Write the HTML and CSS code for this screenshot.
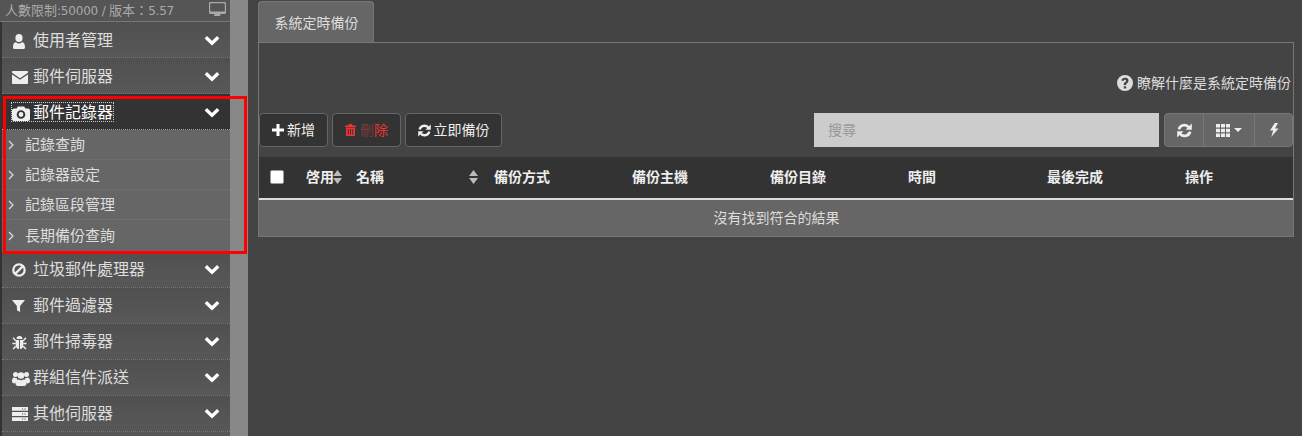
FILE: index.html
```html
<!DOCTYPE html>
<html lang="zh-Hant">
<head>
<meta charset="utf-8">
<title>系統定時備份</title>
<link rel="stylesheet" href="styles.css">
</head>
<body>
<svg class="sprite" width="0" height="0">
  <symbol id="i-user" viewBox="0 0 12 15"><ellipse cx="6" cy="4" rx="3.600" ry="4"/><path d="M1.200 15C.5 15 0 14.500 0 13.600c0-2.700.6-5.400 3-5.400.8.800 1.800 1.200 3 1.200s2.200-.4 3-1.200c2.400 0 3 2.700 3 5.400 0 .9-.5 1.400-1.200 1.400z"/></symbol>
  <symbol id="i-mail" viewBox="0 0 16 13"><path d="M1 0h14c.6 0 1 .4 1 1v.8L8 7.200 0 1.800V1c0-.6.400-1 1-1z"/><path d="M0 3.400l8 5.400 8-5.400V12c0 .6-.4 1-1 1H1c-.6 0-1-.4-1-1z"/></symbol>
  <symbol id="i-camera" viewBox="0 0 18 15"><path fill-rule="evenodd" d="M2 2.500h2.600L5.800.5h6.400l1.200 2H16c1.100 0 2 .9 2 2V13c0 1.100-.9 2-2 2H2c-1.100 0-2-.9-2-2V4.500c0-1.100.9-2 2-2zM9 4.200a4.300 4.300 0 1 0 0 8.600 4.300 4.300 0 0 0 0-8.600zm0 1.900a2.400 2.400 0 1 1 0 4.800 2.400 2.400 0 0 1 0-4.800z"/></symbol>
  <symbol id="i-ban" viewBox="0 0 16 16"><circle cx="8" cy="8" r="6.500" fill="none" stroke="currentColor" stroke-width="2.600"/><path d="M3.800 12.200l8.400-8.400" stroke="currentColor" stroke-width="2.600"/></symbol>
  <symbol id="i-filter" viewBox="0 0 14 14"><path d="M0 .5h14L8.700 7v6.500L5.300 11.500V7z"/></symbol>
  <symbol id="i-bug" viewBox="0 0 16 16"><path d="M4.800 4.200a3.200 3.200 0 0 1 6.400 0z"/><path d="M4 5.200h3.500V15C5.300 15 4 13.300 4 11zM8.500 5.200H12V11c0 2.300-1.300 4-3.500 4z"/><path d="M1.200 3l2.800 3.300M14.800 3l-2.800 3.300M.5 9h3.500M15.500 9H12M1.200 15l2.800-3M14.800 15l-2.800-3" stroke="currentColor" stroke-width="1.500" fill="none"/></symbol>
  <symbol id="i-users" viewBox="0 0 18 15"><circle cx="3.500" cy="3.500" r="2.500"/><circle cx="14.500" cy="3.500" r="2.500"/><circle cx="9" cy="4.500" r="3.300"/><path d="M0 10.500C0 8 .8 6.500 2.500 6.500c1 .6 1.600.8 2.400.5-.2 1.300.4 2.600 1 3.200-1.500.6-2.400 1.200-2.800 2.300-1.800 0-3.100-.7-3.100-2zM18 10.500c0-2.500-.8-4-2.500-4-1 .6-1.600.8-2.400.5.2 1.300-.4 2.600-1 3.200 1.500.6 2.400 1.200 2.800 2.300 1.800 0 3.100-.7 3.100-2z"/><path d="M6.500 8.500c1.500 1 3.500 1 5 0 2 0 3 1.500 3 4 0 1.500-1 2.500-2.300 2.500H5.800c-1.300 0-2.300-1-2.300-2.500 0-2.500 1-4 3-4z"/></symbol>
  <symbol id="i-server" viewBox="0 0 16 14"><path d="M0 0h16v3.800H0zM0 5.100h16v3.800H0zM0 10.200h16V14H0z"/><path d="M10 1.400h1.200v1H10zM12.400 1.400h1.200v1h-1.200zM10 6.500h1.200v1H10zM12.400 6.500h1.200v1h-1.200zM10 11.600h1.200v1H10zM12.400 11.600h1.200v1h-1.200z" fill="#555"/></symbol>
  <symbol id="i-chev" viewBox="0 0 16 11"><path d="M1.800 2.300L8 8.300l6.200-6" fill="none" stroke="currentColor" stroke-width="3.300"/></symbol>
  <symbol id="i-angle" viewBox="0 0 6 10"><path d="M1 1l4 4-4 4" fill="none" stroke="currentColor" stroke-width="1.200"/></symbol>
  <symbol id="i-plus" viewBox="0 0 12 12"><path d="M4.500 0h3v4.500H12v3H7.500V12h-3V7.500H0v-3h4.500z"/></symbol>
  <symbol id="i-trash" viewBox="0 0 11 12"><path d="M4 0h3l.7 1.500H11v1.400H0V1.500h3.300zM1 3.600h9V11c0 .6-.4 1-1 1H2c-.6 0-1-.4-1-1zm1.800 1.400v5.600h1V5zm2.200 0v5.600h1V5zm2.200 0v5.600h1V5z" fill-rule="evenodd"/></symbol>
  <symbol id="i-sync" viewBox="0 0 14 14"><path d="M1.800 6A5.300 5.300 0 0 1 11 3.800" fill="none" stroke="currentColor" stroke-width="2.500"/><path d="M13.800 0.500v5.800H8z"/><path d="M12.200 8A5.300 5.300 0 0 1 3 10.200" fill="none" stroke="currentColor" stroke-width="2.500"/><path d="M.2 13.500V7.700H6z"/></symbol>
  <symbol id="i-th" viewBox="0 0 14 13"><path d="M0 0h4v3.500H0zM5 0h4v3.500H5zM10 0h4v3.500h-4zM0 4.700h4v3.500H0zM5 4.700h4v3.500H5zM10 4.700h4v3.500h-4zM0 9.500h4V13H0zM5 9.500h4V13H5zM10 9.500h4V13h-4z"/></symbol>
  <symbol id="i-bolt" viewBox="0 0 10 14"><path d="M5.800 0L1 7.500h3.200L2.200 14 9.500 5.400H6L9 0z"/></symbol>
  <symbol id="i-help" viewBox="0 0 16 16"><path fill-rule="evenodd" d="M8 0a8 8 0 1 1 0 16A8 8 0 0 1 8 0zM6.800 11.200v2.300h2.400v-2.300zM8 2.700c-2 0-3.300 1-3.600 2.900l2.200.5c.1-.9.600-1.400 1.300-1.400s1.200.4 1.200 1c0 .5-.3.900-1 1.400-.9.600-1.300 1.200-1.300 2.200v.7h2.300v-.4c0-.5.200-.8.900-1.300 1-.7 1.500-1.500 1.500-2.700 0-1.900-1.500-2.900-2.500-2.900z"/></symbol>
  <symbol id="i-desktop" viewBox="0 0 17 15"><path fill-rule="evenodd" d="M1.200 0h14.600c.7 0 1.200.5 1.200 1.200v9.600c0 .7-.5 1.200-1.200 1.200h-4.800v1.200l1 .8H5v-.8l1-1.200H1.200C.5 12 0 11.500 0 10.800V1.200C0 .5.500 0 1.200 0zm0 1.300v8.200h14.600V1.300z"/></symbol>
  <symbol id="i-sort" viewBox="0 0 9 14"><path d="M4.500 0L9 6H0zM4.500 14L0 8h9z"/></symbol>
</svg>

<div class="page">
  <aside class="sidebar">
    <div class="side-main">
      <div class="side-head">
        <span>人數限制<span class="num">:50000 / </span>版本&#xFF1A;<span class="num">5.57</span></span>
        <svg class="ic-desktop"><use href="#i-desktop"/></svg>
      </div>
      <nav class="menu">
        <div class="item"><a class="link"><svg class="ic ic-user"><use href="#i-user"/></svg><span>使用者管理</span></a><svg class="chev"><use href="#i-chev"/></svg></div>
        <div class="item"><a class="link"><svg class="ic ic-mail"><use href="#i-mail"/></svg><span>郵件伺服器</span></a><svg class="chev"><use href="#i-chev"/></svg></div>
        <div class="item active"><a class="link"><svg class="ic ic-camera"><use href="#i-camera"/></svg><span>郵件記錄器</span></a><svg class="chev"><use href="#i-chev"/></svg></div>
        <div class="sub">
          <div class="sub-item"><svg class="angle"><use href="#i-angle"/></svg>記錄查詢</div>
          <div class="sub-item"><svg class="angle"><use href="#i-angle"/></svg>記錄器設定</div>
          <div class="sub-item"><svg class="angle"><use href="#i-angle"/></svg>記錄區段管理</div>
          <div class="sub-item"><svg class="angle"><use href="#i-angle"/></svg>長期備份查詢</div>
        </div>
        <div class="item"><a class="link"><svg class="ic ic-ban"><use href="#i-ban"/></svg><span>垃圾郵件處理器</span></a><svg class="chev"><use href="#i-chev"/></svg></div>
        <div class="item"><a class="link"><svg class="ic ic-filter"><use href="#i-filter"/></svg><span>郵件過濾器</span></a><svg class="chev"><use href="#i-chev"/></svg></div>
        <div class="item"><a class="link"><svg class="ic ic-bug"><use href="#i-bug"/></svg><span>郵件掃毒器</span></a><svg class="chev"><use href="#i-chev"/></svg></div>
        <div class="item"><a class="link"><svg class="ic ic-users"><use href="#i-users"/></svg><span>群組信件派送</span></a><svg class="chev"><use href="#i-chev"/></svg></div>
        <div class="item"><a class="link"><svg class="ic ic-server"><use href="#i-server"/></svg><span>其他伺服器</span></a><svg class="chev"><use href="#i-chev"/></svg></div>
        <div class="item-end"></div>
      </nav>
    </div>
    <div class="scrollbar"></div>
  </aside>

  <main class="content">
    <div class="tabs"><div class="tab">系統定時備份</div></div>
    <section class="panel">
      <div class="help"><svg class="ic-help"><use href="#i-help"/></svg><span>瞭解什麼是系統定時備份</span></div>
      <div class="toolbar">
        <button class="btn"><svg class="b-ic b-plus"><use href="#i-plus"/></svg>新增</button>
        <button class="btn btn-del"><svg class="b-ic b-trash"><use href="#i-trash"/></svg><span class="dim">刪</span>除</button>
        <button class="btn"><svg class="b-ic b-sync"><use href="#i-sync"/></svg>立即備份</button>
        <div class="search">搜尋</div>
        <div class="group">
          <div class="g-btn g-sync"><svg class="g-ic"><use href="#i-sync"/></svg></div>
          <div class="g-btn g-th"><svg class="g-th-ic"><use href="#i-th"/></svg><span class="caret"></span></div>
          <div class="g-btn g-bolt"><svg class="g-bolt-ic"><use href="#i-bolt"/></svg></div>
        </div>
      </div>
      <div class="thead">
        <div class="th th-check"><span class="check"></span></div>
        <div class="th th-sort th-narrow">啓用<svg class="sort sort-tight"><use href="#i-sort"/></svg></div>
        <div class="th th-sort">名稱<svg class="sort"><use href="#i-sort"/></svg></div>
        <div class="th">備份方式</div>
        <div class="th">備份主機</div>
        <div class="th">備份目錄</div>
        <div class="th">時間</div>
        <div class="th">最後完成</div>
        <div class="th">操作</div>
      </div>
      <div class="empty">沒有找到符合的結果</div>
    </section>
  </main>
</div>
<div class="highlight"></div>
</body>
</html>
```

FILE: styles.css
```css
* { box-sizing: border-box; }
html, body { margin: 0; height: 100%; overflow: hidden; }
body {
  background: #444;
  color: #fff;
  font: 14px/20px "Liberation Sans", "Noto Sans CJK TC", sans-serif;
}
svg { fill: currentColor; display: block; flex: none; }
.sprite { position: absolute; }
.page { display: flex; height: 436px; overflow: hidden; }

/* sidebar */
.sidebar { width: 248px; flex: none; display: flex; background: #333; }
.side-main { width: 230px; flex: none; }
.scrollbar { width: 18px; background: #888; }
.side-head {
  height: 22px;
  background: #555;
  border-bottom: 1px solid #777;
  padding: 0 4px 0 5px;
  display: flex;
  align-items: center;
  justify-content: space-between;
  color: #aaa;
  font-size: 13px;
}
.num { font: 12px/20px "DejaVu Sans", sans-serif; letter-spacing: -.2px; white-space: pre; }
.ic-desktop { width: 17px; height: 15px; color: #aaa; margin-bottom: 3px; }
.menu { margin-left: 2px; }
.item {
  height: 36px;
  display: flex;
  align-items: center;
  justify-content: space-between;
  background: linear-gradient(#505050, #585858);
  border-bottom: 1px dotted #777;
  padding: 1px 10px 0 10px;
  color: #ddd;
  font-size: 16px;
}
.sub ~ .item { padding-top: 0; padding-bottom: 1px; }
.link { display: grid; grid-template-columns: 21px auto; align-items: center; height: 18px; white-space: nowrap; }
.item.active { background: #333; color: #fff; border-bottom-color: #aaa; }
.item.active .link { outline: 1px dotted #ccc; }
.item-end { height: 4px; background: #555; }
.ic { color: #eee; justify-self: start; }
.ic-user { width: 12px; height: 15px; margin-left: 1px; }
.ic-mail { width: 16px; height: 13px; }
.ic-camera { width: 18px; height: 15px; }
.ic-ban { width: 14px; height: 14px; }
.ic-filter { width: 13px; height: 14px; }
.ic-bug { width: 15px; height: 15px; }
.ic-users { width: 18px; height: 15px; }
.ic-server { width: 16px; height: 14px; }
.chev { width: 16px; height: 11px; color: #fff; }
.sub { background: #666; height: 122px; padding-bottom: 2px; }
.sub-item {
  height: 30px;
  display: flex;
  align-items: center;
  border-bottom: 1px dotted #777;
  color: #ddd;
  font-size: 15px;
  padding-left: 6px;
}
.sub-item:last-child { border-bottom: 0; padding-top: 1px; }
.angle { width: 6px; height: 10px; margin-right: 11px; }

/* main */
.content { flex: 1; padding: 1px 8px 0 10px; min-width: 0; }
.tabs { display: flex; height: 41px; }
.tab {
  width: 116px;
  background: #666;
  border: 1px solid #777;
  border-bottom: 0;
  border-radius: 4px 4px 0 0;
  color: #ddd;
  text-align: center;
  line-height: 42px;
  padding-left: 1px;
}
.panel { border: 1px solid #777; height: 195px; }
.help {
  height: 20px;
  margin-top: 30px;
  padding-right: 2px;
  display: flex;
  justify-content: flex-end;
  align-items: center;
  gap: 4px;
  color: #ddd;
}
.ic-help { width: 16px; height: 16px; color: #ddd; }
.toolbar { display: flex; height: 34px; margin-top: 20px; }
.btn {
  height: 34px;
  border: 1px solid #666;
  border-radius: 4px;
  background: #333;
  color: #eee;
  font: inherit;
  padding: 0;
  display: flex;
  align-items: center;
  justify-content: center;
  width: 69px;
  margin-right: 4px;
}
.btn:nth-child(3) { width: 97px; }
.btn-del { color: #e33; }
.dim { color: #7a3a3a; }
.b-ic { margin-right: 3px; }
.b-plus { width: 12px; height: 12px; color: #fff; }
.b-trash { width: 11px; height: 12px; margin-right: 4px; }
.b-sync { width: 13px; height: 13px; }
.search {
  width: 345px;
  height: 34px;
  margin-left: auto;
  background: #ccc;
  color: #999;
  padding-left: 14px;
  line-height: 34px;
}
.group {
  width: 129px;
  height: 34px;
  margin-left: 5px;
  display: flex;
  background: #666;
  border: 1px solid #777;
  border-radius: 4px;
  color: #eee;
}
.g-btn { display: flex; align-items: center; justify-content: center; border-right: 1px solid #777; }
.g-btn:last-child { border-right: 0; }
.g-sync { width: 39px; }
.g-th { width: 51px; gap: 4px; }
.g-bolt { flex: 1; }
.g-ic { width: 15px; height: 15px; }
.g-th-ic { width: 14px; height: 13px; }
.g-bolt-ic { width: 10px; height: 14px; }
.caret { width: 0; height: 0; border: 4px solid transparent; border-top-color: #eee; border-bottom: 0; }
.thead {
  margin-top: 10px;
  height: 43px;
  background: #333;
  border-bottom: 2px solid #ddd;
  display: grid;
  grid-template-columns: 36px 50px repeat(4, 138px) 139px 138px 1fr;
  align-items: center;
  padding-bottom: 1px;
  font-weight: 700;
  color: #eee;
  font-size: 14px;
}
.th { padding-left: 11px; white-space: nowrap; }
.th-sort { display: flex; align-items: center; justify-content: space-between; padding-right: 5px; }
.th-narrow { padding-right: 4px; }
.sort { width: 9px; height: 14px; color: #bbb; }
.sort-tight { margin-left: -1px; }
.th-check { padding-left: 11px; }
.check {
  display: block;
  width: 14px;
  height: 14px;
  background: #fff;
  border: 1px solid #99a;
  border-radius: 2px;
}
.empty { height: 36px; background: #666; color: #ddd; text-align: center; line-height: 37px; padding-left: 1px; }

.highlight {
  position: absolute;
  left: 3px;
  top: 96px;
  width: 244px;
  height: 158px;
  border: 3px solid #f00;
  pointer-events: none;
}
```
